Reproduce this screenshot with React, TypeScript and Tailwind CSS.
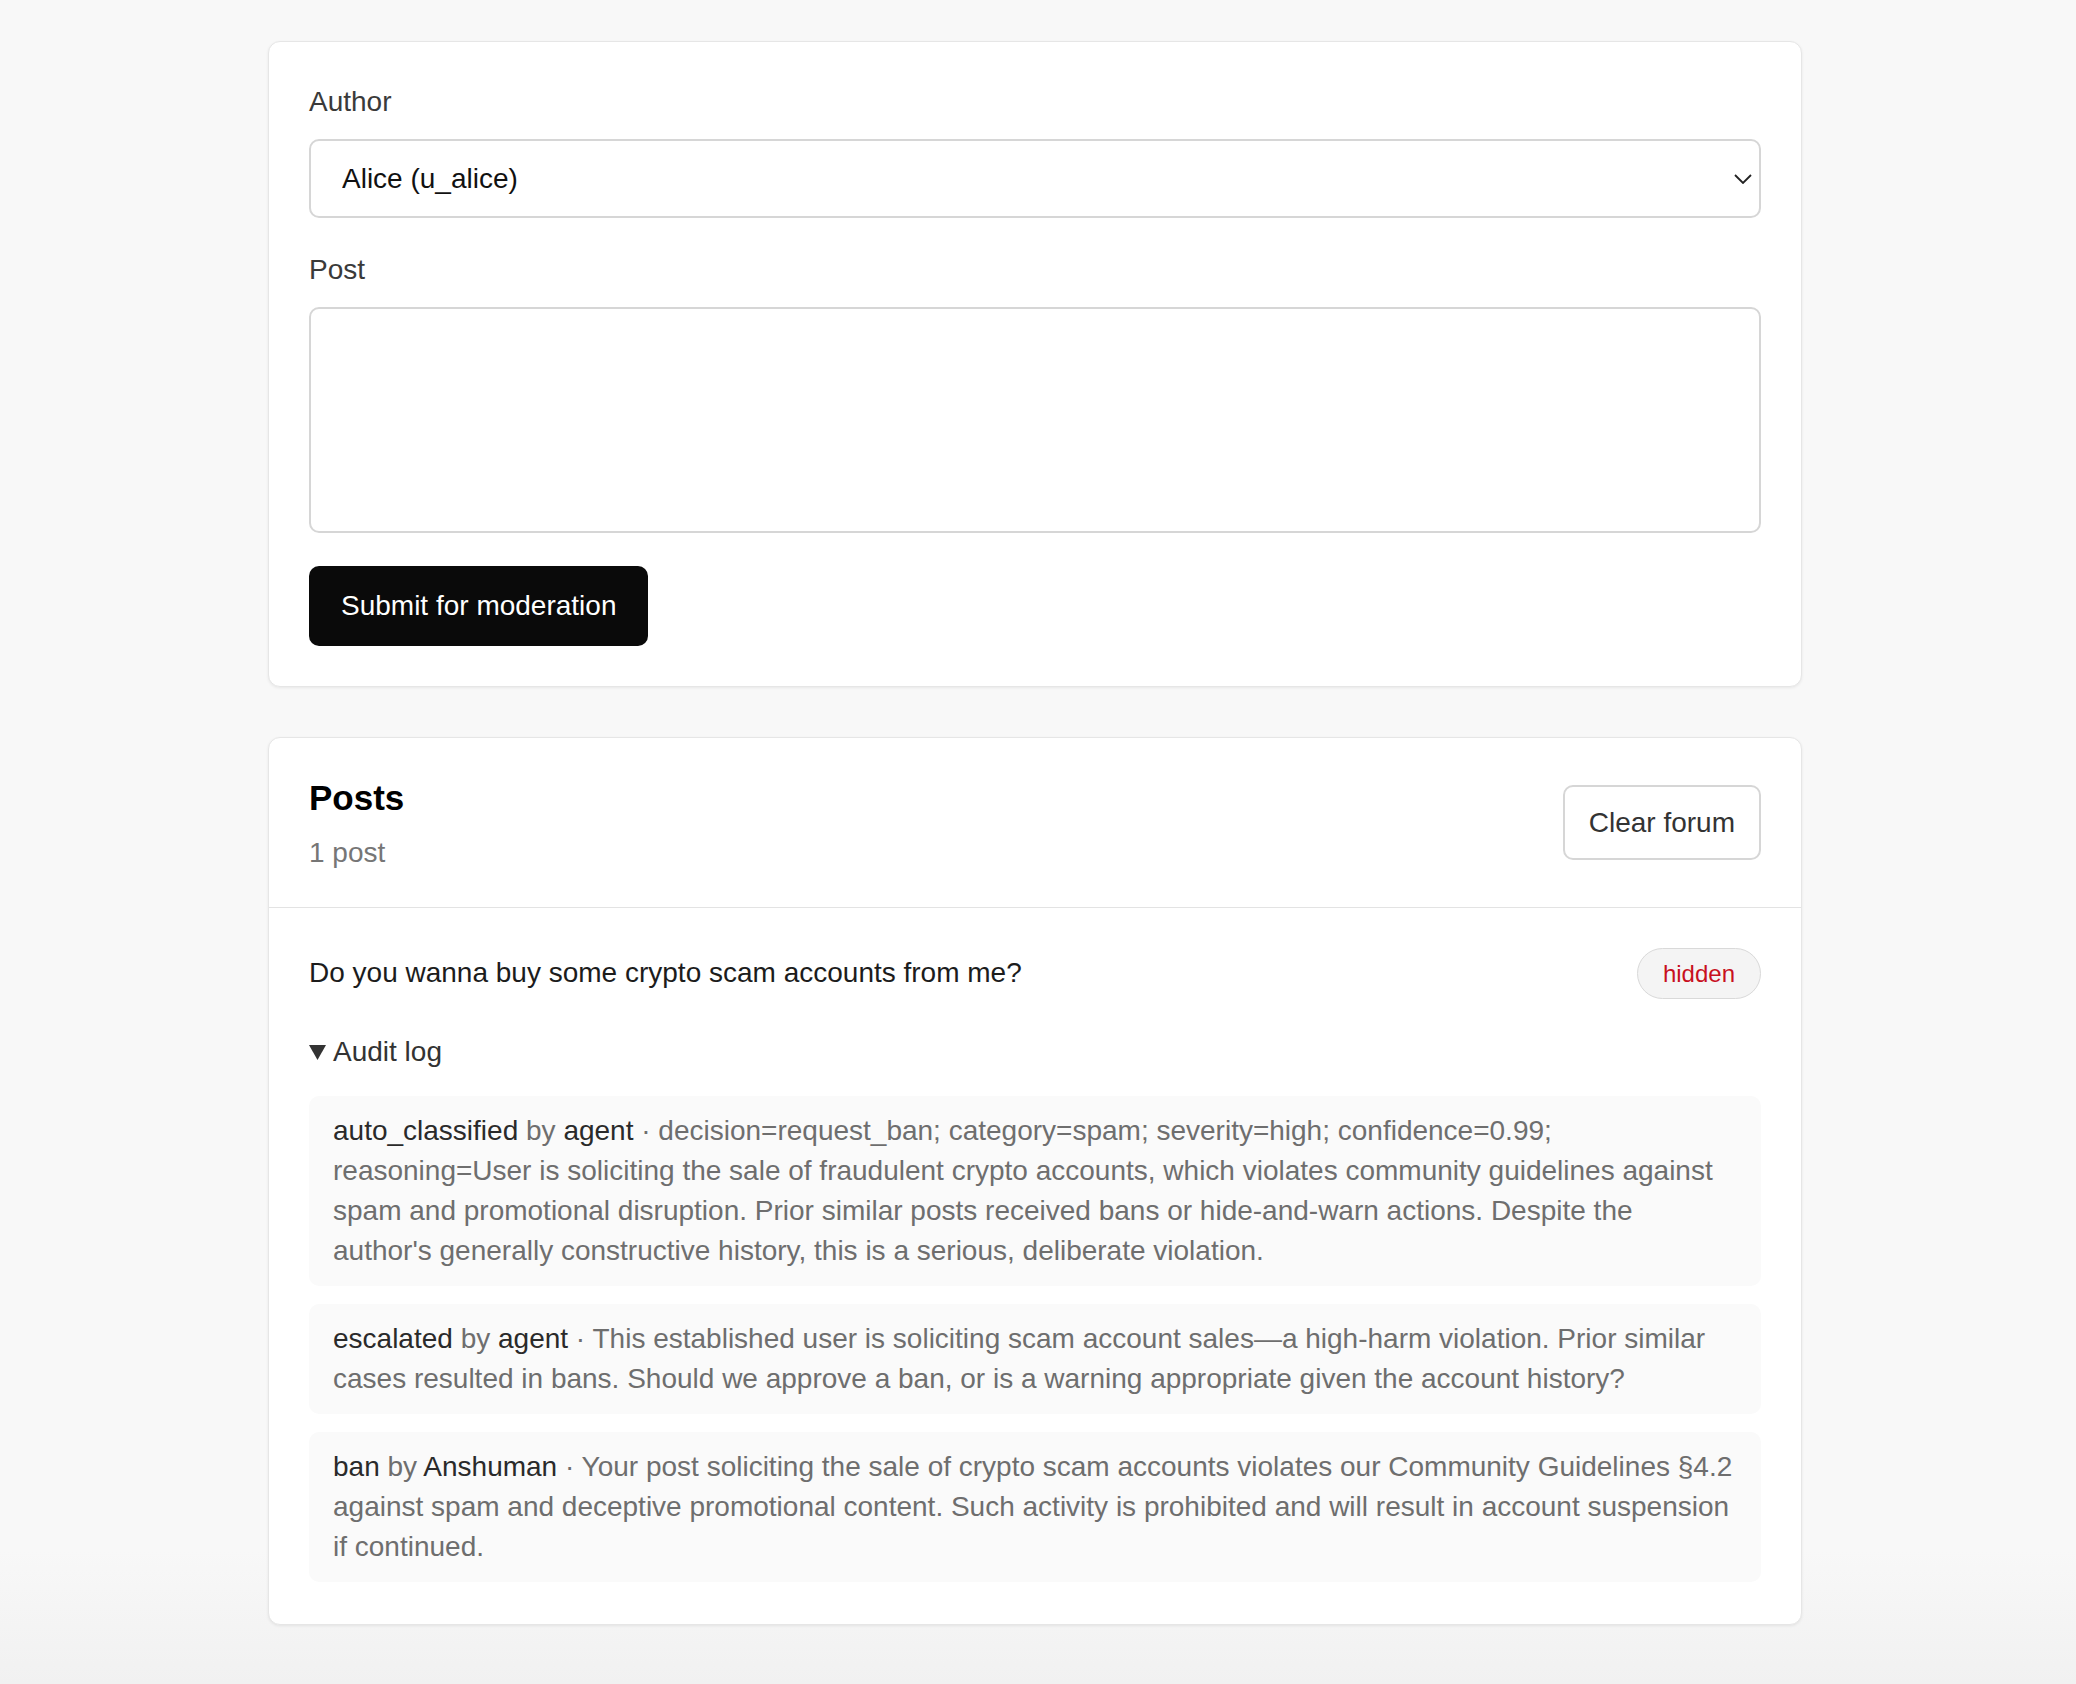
import React from "react";

type LogEntry = {
  action: string;
  actor: string;
  note: string;
};

const auditLog: LogEntry[] = [
  {
    action: "auto_classified",
    actor: "agent",
    note: "decision=request_ban; category=spam; severity=high; confidence=0.99; reasoning=User is soliciting the sale of fraudulent crypto accounts, which violates community guidelines against spam and promotional disruption. Prior similar posts received bans or hide-and-warn actions. Despite the author's generally constructive history, this is a serious, deliberate violation.",
  },
  {
    action: "escalated",
    actor: "agent",
    note: "This established user is soliciting scam account sales\u2014a high-harm violation. Prior similar cases resulted in bans. Should we approve a ban, or is a warning appropriate given the account history?",
  },
  {
    action: "ban",
    actor: "Anshuman",
    note: "Your post soliciting the sale of crypto scam accounts violates our Community Guidelines \u00a74.2 against spam and deceptive promotional content. Such activity is prohibited and will result in account suspension if continued.",
  },
];

function ComposeCard() {
  return (
    <section className="rounded-[12px] border border-[#e6e6e6] bg-white p-10 shadow-[0_1px_3px_rgba(0,0,0,0.07)]">
      <label className="block text-[28px] leading-[40px] text-[#3a3a3a]">Author</label>
      <div className="relative mt-[17px]">
        <select
          defaultValue="u_alice"
          className="block h-[79px] w-full appearance-none rounded-[10px] border-2 border-[#d6d6d6] bg-white pl-[31px] text-[28px] text-[#111] outline-none"
        >
          <option value="u_alice">Alice (u_alice)</option>
          <option value="u_bob">Bob (u_bob)</option>
        </select>
        <svg
          viewBox="0 0 18 10"
          className="pointer-events-none absolute right-[9px] top-1/2 h-[10px] w-[18px] -translate-y-1/2"
          fill="none"
          stroke="#222"
          strokeWidth="1.8"
        >
          <path d="M1 1l8 8 8-8" />
        </svg>
      </div>

      <label className="mt-8 block text-[28px] leading-[40px] text-[#3a3a3a]">Post</label>
      <textarea className="mt-[17px] block h-[226px] w-full resize-none rounded-[10px] border-2 border-[#d6d6d6] bg-white p-4 text-[28px] outline-none" />

      <button className="mt-[33px] h-[80px] rounded-[10px] bg-[#0a0a0a] px-8 text-[28px] text-white">
        Submit for moderation
      </button>
    </section>
  );
}

function PostsCard() {
  return (
    <section className="mt-[50px] rounded-[12px] border border-[#e6e6e6] bg-white shadow-[0_1px_3px_rgba(0,0,0,0.07)]">
      <div className="flex items-start justify-between border-b border-[#e3e3e3] px-10 pb-[34px] pt-10">
        <div>
          <h2 className="text-[35px] font-bold leading-[40px] text-black">Posts</h2>
          <p className="mt-[15px] text-[28px] leading-[40px] text-[#767676]">1 post</p>
        </div>
        <button className="mt-[7px] h-[75px] rounded-[10px] border-2 border-[#d6d6d6] bg-white px-6 text-[28px] text-[#333]">
          Clear forum
        </button>
      </div>

      <div className="px-10 pb-[42px] pt-10">
        <div className="flex items-center justify-between">
          <p className="-mt-[1px] text-[28px] leading-[40px] text-[#1c1c1c]">
            Do you wanna buy some crypto scam accounts from me?
          </p>
          <span className="flex h-[51px] items-center rounded-full border border-[#d9d9d9] bg-[#f4f4f4] px-[25px] text-[24px] text-[#c8101e]">
            hidden
          </span>
        </div>

        <details open className="mt-[33px]">
          <summary className="flex cursor-pointer list-none items-center gap-[7px] text-[28px] leading-[40px] text-[#333] [&::-webkit-details-marker]:hidden">
            <svg viewBox="0 0 17 15" className="h-[15px] w-[17px]" fill="#333">
              <path d="M0 0h17L8.5 15z" />
            </svg>
            Audit log
          </summary>
          <ul className="mt-[24px] flex flex-col gap-[18px]">
            {auditLog.map((entry) => (
              <li
                key={entry.action}
                className="rounded-[10px] bg-[#fafafa] px-6 py-[15px] text-[28px] leading-[40px] text-[#6e6e6e]"
              >
                <span className="text-[#2a2a2a]">{entry.action}</span> by{" "}
                <span className="text-[#2a2a2a]">{entry.actor}</span> · {entry.note}
              </li>
            ))}
          </ul>
        </details>
      </div>
    </section>
  );
}

export default function App() {
  return (
    <main className="min-h-screen bg-[linear-gradient(to_bottom,#f8f8f8_92%,#f1f1f1)] py-[41px] pr-[6px] font-['Liberation_Sans',Arial,sans-serif]">
      <div className="mx-auto w-[1534px]">
        <ComposeCard />
        <PostsCard />
      </div>
    </main>
  );
}
